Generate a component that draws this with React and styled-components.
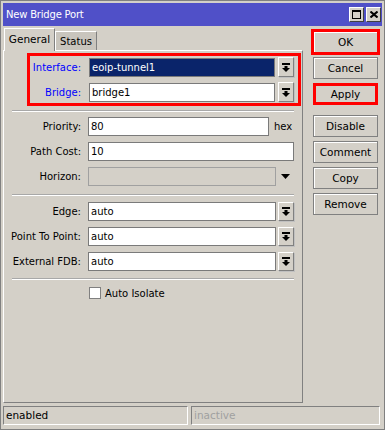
import React from "react";
import styled, { createGlobalStyle, css } from "styled-components";

const Global = createGlobalStyle`
  html, body { margin: 0; padding: 0; background: #d4d0c8; }
  body { font-family: "DejaVu Sans", "Liberation Sans", sans-serif; font-size: 10px; color: #000; }
  * { box-sizing: border-box; }
`;

const Window = styled.div`
  width: 385px;
  height: 430px;
  border: 1px solid #808080;
  padding: 2px 2px 4px 2px;
  background: #d4d0c8;
  display: flex;
  flex-direction: column;
  overflow: hidden;
`;

const TitleBar = styled.div`
  height: 23px;
  background: #5050c8;
  color: #fff;
  display: flex;
  align-items: center;
  padding: 0 1px 0 3px;
  font-size: 10px;
  letter-spacing: -0.2px;
`;

const TitleText = styled.div`
  flex: 1;
`;

const TitleButtons = styled.div`
  display: flex;
  gap: 2px;
`;

const TitleBtn = styled.div`
  width: 15px;
  height: 15px;
  background: #d4d0c8;
  border: 1px solid;
  border-color: #fff #404040 #404040 #fff;
  display: flex;
  align-items: center;
  justify-content: center;
`;

const Main = styled.div`
  flex: 1;
  display: flex;
  min-height: 0;
`;

const LeftCol = styled.div`
  width: 300px;
  display: flex;
  flex-direction: column;
  padding-top: 2px;
`;

const Tabs = styled.div`
  height: 22px;
  display: flex;
  align-items: flex-end;
  padding-left: 1px;
  position: relative;
  z-index: 1;
`;

const Tab = styled.div`
  height: ${(p) => (p.$active ? 23 : 19)}px;
  width: ${(p) => p.$w}px;
  margin-bottom: ${(p) => (p.$active ? -1 : 0)}px;
  background: ${(p) => (p.$active ? "#d4d0c8" : "#c9c5bd")};
  border-top: 1px solid #fff;
  border-left: 1px solid #fff;
  border-right: 1px solid #808080;
  display: flex;
  align-items: center;
  justify-content: center;
  padding-bottom: ${(p) => (p.$active ? 2 : 0)}px;
  font-size: ${(p) => (p.$active ? 10.5 : 10)}px;
`;

const Panel = styled.div`
  flex: 1;
  border-top: 1px solid #fff;
  border-left: 1px solid #fff;
  border-right: 1px solid #808080;
  border-bottom: 1px solid #808080;
  display: flex;
  flex-direction: column;
`;

const RedGroup = styled.div`
  margin: 2px 0 0 23px;
  width: 274px;
  height: 53px;
  border: 3px solid #f00;
  padding-top: 1px;
  display: flex;
  flex-direction: column;
  gap: 5px;
`;

const Rows = styled.div`
  display: flex;
  flex-direction: column;
  gap: 6px;
  margin-top: ${(p) => p.$mt}px;
`;

const Row = styled.div`
  display: flex;
  align-items: center;
  height: ${(p) => p.$h || 19}px;
`;

const Label = styled.div`
  width: ${(p) => p.$w}px;
  margin-right: ${(p) => p.$gap}px;
  text-align: right;
  color: ${(p) => (p.$blue ? "#0000ff" : "#000")};
  white-space: nowrap;
`;

const Field = styled.div`
  width: ${(p) => p.$w}px;
  height: 19px;
  border: 1px solid #7a7a7a;
  background: #fff;
  padding-left: 2px;
  line-height: 17px;
  white-space: nowrap;
  ${(p) =>
    p.$selected &&
    css`
      background: #0a246a;
      color: #fff;
    `}
  ${(p) =>
    p.$disabled &&
    css`
      background: #d4d0c8;
      border-color: #a0a0a0;
    `}
`;

const DropBtn = styled.div`
  width: 16px;
  height: ${(p) => p.$h || 19}px;
  margin-left: ${(p) => p.$ml || 2}px;
  border: 1px solid;
  border-color: #fff #808080 #808080 #fff;
  box-shadow: 1px 1px 0 #c0c0c0;
  display: flex;
  align-items: center;
  justify-content: center;
`;

const Suffix = styled.div`
  margin-left: 5px;
`;

const TriangleSlot = styled.div`
  width: 18px;
  display: flex;
  justify-content: center;
  align-items: center;
`;

const Separator = styled.div`
  margin: ${(p) => p.$mt}px 8px 0 8px;
  border-top: 1px solid #a8a8a8;
  border-bottom: 1px solid #fff;
`;

const CheckRow = styled.div`
  display: flex;
  align-items: center;
  margin: 7px 0 0 85px;
  gap: 4px;
`;

const CheckBox = styled.div`
  width: 12px;
  height: 12px;
  background: #fff;
  border: 1px solid #808080;
`;

const RightCol = styled.div`
  width: 65px;
  margin-left: 10px;
  padding-top: 5px;
  display: flex;
  flex-direction: column;
  gap: 4px;
`;

const Button = styled.div`
  height: 22px;
  border: 1px solid #808080;
  box-shadow: inset 1px 1px 0 #fff;
  display: flex;
  align-items: center;
  justify-content: center;
  margin-top: ${(p) => p.$mt || 0}px;
  font-size: 10.5px;
  ${(p) =>
    p.$red &&
    css`
      outline: 3px solid #f00;
      outline-offset: ${p.$offset}px;
    `}
`;

const StatusBar = styled.div`
  height: 19px;
  margin-top: 3px;
  display: flex;
  gap: 3px;
  padding-right: 2px;
`;

const StatusCell = styled.div`
  width: ${(p) => (p.$w ? `${p.$w}px` : "auto")};
  flex: ${(p) => (p.$w ? "none" : 1)};
  border-top: 1px solid #808080;
  border-left: 1px solid #808080;
  border-bottom: 1px solid #fff;
  border-right: 1px solid #fff;
  padding-left: 2px;
  line-height: 17px;
  font-size: 10.5px;
  color: ${(p) => (p.$muted ? "#a0a0a0" : "#000")};
`;

const DropIcon = () => (
  <svg width="8" height="9" viewBox="0 0 8 9">
    <rect x="0" y="0" width="8" height="2" fill="#000" />
    <path d="M2.5 3 H5.5 V5 H8 L4 9 L0 5 H2.5 Z" fill="#000" />
  </svg>
);

const DownTriangle = () => (
  <svg width="9" height="5" viewBox="0 0 9 5">
    <path d="M0 0 H9 L4.5 5 Z" fill="#000" />
  </svg>
);

const MaxIcon = () => (
  <svg width="9" height="9" viewBox="0 0 9 9">
    <rect x="0.5" y="0.5" width="8" height="8" fill="none" stroke="#000" />
    <rect x="0" y="0" width="9" height="2" fill="#000" />
  </svg>
);

const CloseIcon = () => (
  <svg width="8" height="7" viewBox="0 0 8 7">
    <path d="M0.5 0.5 L7.5 6.5 M7.5 0.5 L0.5 6.5" stroke="#000" strokeWidth="2" />
  </svg>
);

export default function App() {
  return (
    <>
      <Global />
      <Window>
        <TitleBar>
          <TitleText>New Bridge Port</TitleText>
          <TitleButtons>
            <TitleBtn><MaxIcon /></TitleBtn>
            <TitleBtn><CloseIcon /></TitleBtn>
          </TitleButtons>
        </TitleBar>
        <Main>
          <LeftCol>
            <Tabs>
              <Tab $active $w={51}>General</Tab>
              <Tab $w={42}>Status</Tab>
            </Tabs>
            <Panel>
              <RedGroup>
                <Row $h={20}>
                  <Label $w={51} $gap={8} $blue>Interface:</Label>
                  <Field $w={186} $selected>eoip-tunnel1</Field>
                  <DropBtn $h={20} $ml={3}><DropIcon /></DropBtn>
                </Row>
                <Row $h={20}>
                  <Label $w={51} $gap={8} $blue>Bridge:</Label>
                  <Field $w={186}>bridge1</Field>
                  <DropBtn $h={20} $ml={3}><DropIcon /></DropBtn>
                </Row>
              </RedGroup>
              <Separator $mt={4} />
              <Rows $mt={5}>
                <Row>
                  <Label $w={77} $gap={7}>Priority:</Label>
                  <Field $w={181}>80</Field>
                  <Suffix>hex</Suffix>
                </Row>
                <Row>
                  <Label $w={77} $gap={7}>Path Cost:</Label>
                  <Field $w={206}>10</Field>
                </Row>
                <Row>
                  <Label $w={77} $gap={7}>Horizon:</Label>
                  <Field $w={188} $disabled />
                  <TriangleSlot><DownTriangle /></TriangleSlot>
                </Row>
              </Rows>
              <Separator $mt={8} />
              <Rows $mt={6}>
                <Row>
                  <Label $w={77} $gap={7}>Edge:</Label>
                  <Field $w={188}>auto</Field>
                  <DropBtn><DropIcon /></DropBtn>
                </Row>
                <Row>
                  <Label $w={77} $gap={7}>Point To Point:</Label>
                  <Field $w={188}>auto</Field>
                  <DropBtn><DropIcon /></DropBtn>
                </Row>
                <Row>
                  <Label $w={77} $gap={7}>External FDB:</Label>
                  <Field $w={188}>auto</Field>
                  <DropBtn><DropIcon /></DropBtn>
                </Row>
              </Rows>
              <Separator $mt={7} />
              <CheckRow>
                <CheckBox />
                <span>Auto Isolate</span>
              </CheckRow>
            </Panel>
          </LeftCol>
          <RightCol>
            <Button $red $offset={-1}>OK</Button>
            <Button>Cancel</Button>
            <Button $red $offset={-3}>Apply</Button>
            <Button $mt={6}>Disable</Button>
            <Button>Comment</Button>
            <Button>Copy</Button>
            <Button>Remove</Button>
          </RightCol>
        </Main>
        <StatusBar>
          <StatusCell $w={185}>enabled</StatusCell>
          <StatusCell $muted>inactive</StatusCell>
        </StatusBar>
      </Window>
    </>
  );
}
